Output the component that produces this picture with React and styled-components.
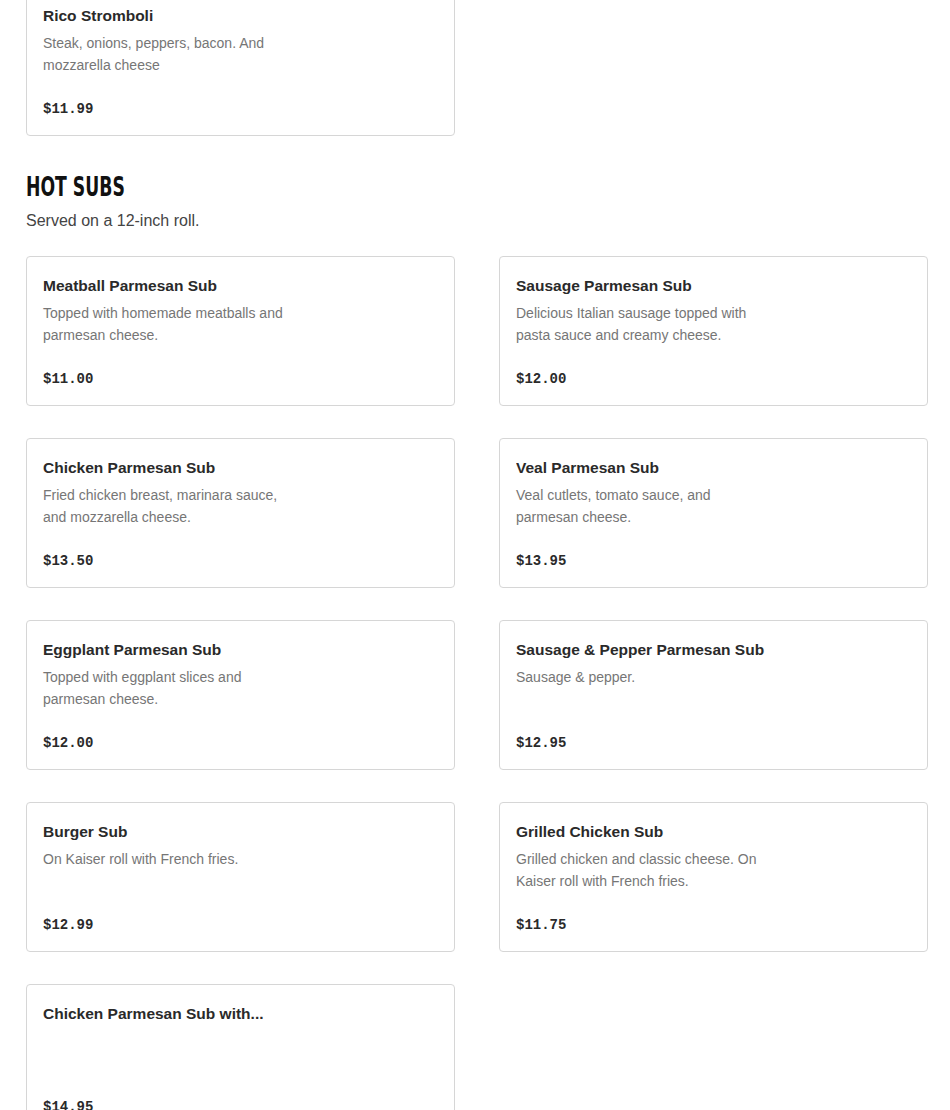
import React from 'react'
import styled, { createGlobalStyle } from 'styled-components'

const GlobalStyle = createGlobalStyle`
  html, body {
    margin: 0;
    padding: 0;
    background: #ffffff;
  }
  body {
    font-family: 'Liberation Sans', Arial, sans-serif;
    color: #222222;
    overflow: hidden;
  }
`

const Page = styled.div`
  padding: 0 22px 0 26px;
  margin-top: -14px;
`

const Section = styled.section`
  margin-bottom: 32px;
`

const SectionTitle = styled.h2`
  display: inline-block;
  margin: 2px 0 0;
  font-family: 'DejaVu Sans Condensed', 'Liberation Sans', sans-serif;
  font-weight: 700;
  font-size: 27px;
  line-height: 34px;
  color: #111111;
  text-transform: uppercase;
  transform: scaleX(0.71);
  transform-origin: left center;
`

const SectionNote = styled.p`
  margin: 5px 0 23px;
  font-size: 16px;
  line-height: 24px;
  color: #444444;
`

const Grid = styled.div`
  display: grid;
  grid-template-columns: repeat(2, 429px);
  column-gap: 44px;
  row-gap: 32px;
`

const Card = styled.div`
  box-sizing: border-box;
  height: 150px;
  display: flex;
  flex-direction: column;
  padding: 17px 16px 16px;
  border: 1px solid #d6d6d6;
  border-radius: 4px;
  background: #ffffff;
`

const Name = styled.div`
  font-size: 15.5px;
  line-height: 24px;
  font-weight: 700;
  color: #2a2a2a;
  white-space: nowrap;
  overflow: hidden;
  text-overflow: ellipsis;
`

const Description = styled.div`
  margin-top: 4px;
  max-width: 250px;
  font-size: 14px;
  line-height: 22px;
  color: #767676;
`

const Price = styled.div`
  margin-top: auto;
  font-family: 'Liberation Mono', 'Courier New', monospace;
  font-weight: 700;
  font-size: 14px;
  line-height: 20px;
  color: #2a2a2a;
`

const stromboli = [
  { name: 'Rico Stromboli', desc: 'Steak, onions, peppers, bacon. And mozzarella cheese', price: '$11.99' }
]

const hotSubs = [
  { name: 'Meatball Parmesan Sub', desc: 'Topped with homemade meatballs and parmesan cheese.', price: '$11.00' },
  { name: 'Sausage Parmesan Sub', desc: 'Delicious Italian sausage topped with pasta sauce and creamy cheese.', price: '$12.00' },
  { name: 'Chicken Parmesan Sub', desc: 'Fried chicken breast, marinara sauce, and mozzarella cheese.', price: '$13.50' },
  { name: 'Veal Parmesan Sub', desc: 'Veal cutlets, tomato sauce, and parmesan cheese.', price: '$13.95' },
  { name: 'Eggplant Parmesan Sub', desc: 'Topped with eggplant slices and parmesan cheese.', price: '$12.00' },
  { name: 'Sausage & Pepper Parmesan Sub', desc: 'Sausage & pepper.', price: '$12.95' },
  { name: 'Burger Sub', desc: 'On Kaiser roll with French fries.', price: '$12.99' },
  { name: 'Grilled Chicken Sub', desc: 'Grilled chicken and classic cheese. On Kaiser roll with French fries.', price: '$11.75' },
  { name: 'Chicken Parmesan Sub with...', desc: '', price: '$14.95' }
]

const MenuCard = ({ item }) => (
  <Card>
    <Name>{item.name}</Name>
    {item.desc && <Description>{item.desc}</Description>}
    <Price>{item.price}</Price>
  </Card>
)

const App = () => (
  <>
    <GlobalStyle />
    <Page>
      <Section>
        <Grid>
          {stromboli.map(item => <MenuCard key={item.name} item={item} />)}
        </Grid>
      </Section>
      <Section>
        <SectionTitle>Hot Subs</SectionTitle>
        <SectionNote>Served on a 12-inch roll.</SectionNote>
        <Grid>
          {hotSubs.map(item => <MenuCard key={item.name} item={item} />)}
        </Grid>
      </Section>
    </Page>
  </>
)

export default App
